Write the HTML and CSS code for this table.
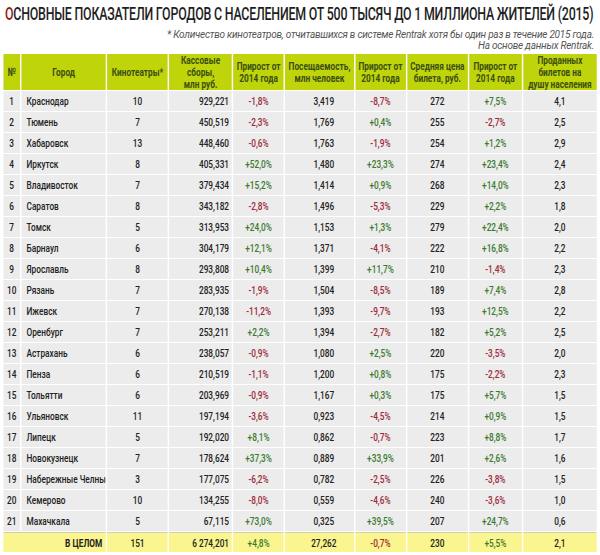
FILE: index.html
```html
<!DOCTYPE html>
<html lang="ru">
<head>
<meta charset="utf-8">
<title>Основные показатели</title>
<link rel="stylesheet" href="styles.css">
</head>
<body>
<div class="page">
  <div class="title-wrap">
    <h1 class="title"><span class="first">О</span>СНОВНЫЕ ПОКАЗАТЕЛИ ГОРОДОВ С НАСЕЛЕНИЕМ ОТ 500 ТЫСЯЧ ДО 1 МИЛЛИОНА ЖИТЕЛЕЙ (2015)</h1>
  </div>
  <p class="note">* Количество кинотеатров, отчитавшихся в системе Rentrak хотя бы один раз в течение 2015 года.<br>На основе данных Rentrak.</p>
  <div class="table-wrap">
  <table class="data">
    <colgroup>
      <col class="c-num"><col class="c-city"><col class="c-cin"><col class="c-box"><col class="c-g1"><col class="c-att"><col class="c-g2"><col class="c-price"><col class="c-g3"><col class="c-sold">
    </colgroup>
    <thead>
      <tr>
        <th>№</th><th>Город</th><th>Кинотеатры*</th><th>Кассовые<br>сборы,<br>млн руб.</th><th>Прирост от<br>2014 года</th><th>Посещаемость,<br>млн человек</th><th>Прирост от<br>2014 года</th><th>Средняя цена<br>билета, руб.</th><th>Прирост от<br>2014 года</th><th>Проданных<br>билетов на<br>душу населения</th>
      </tr>
    </thead>
    <tbody>
      <tr><td>1</td><td class="city">Краснодар</td><td>10</td><td class="r">929,221</td><td class="neg">-1,8%</td><td class="att">3,419</td><td class="neg">-8,7%</td><td>272</td><td class="pos">+7,5%</td><td>4,1</td></tr>
      <tr><td>2</td><td class="city">Тюмень</td><td>7</td><td class="r">450,519</td><td class="neg">-2,3%</td><td class="att">1,769</td><td class="pos">+0,4%</td><td>255</td><td class="neg">-2,7%</td><td>2,5</td></tr>
      <tr><td>3</td><td class="city">Хабаровск</td><td>13</td><td class="r">448,460</td><td class="neg">-0,6%</td><td class="att">1,763</td><td class="neg">-1,9%</td><td>254</td><td class="pos">+1,2%</td><td>2,9</td></tr>
      <tr><td>4</td><td class="city">Иркутск</td><td>8</td><td class="r">405,331</td><td class="pos">+52,0%</td><td class="att">1,480</td><td class="pos">+23,3%</td><td>274</td><td class="pos">+23,4%</td><td>2,4</td></tr>
      <tr><td>5</td><td class="city">Владивосток</td><td>7</td><td class="r">379,434</td><td class="pos">+15,2%</td><td class="att">1,414</td><td class="pos">+0,9%</td><td>268</td><td class="pos">+14,0%</td><td>2,3</td></tr>
      <tr><td>6</td><td class="city">Саратов</td><td>8</td><td class="r">343,182</td><td class="neg">-2,8%</td><td class="att">1,496</td><td class="neg">-5,3%</td><td>229</td><td class="pos">+2,2%</td><td>1,8</td></tr>
      <tr><td>7</td><td class="city">Томск</td><td>5</td><td class="r">313,953</td><td class="pos">+24,0%</td><td class="att">1,153</td><td class="pos">+1,3%</td><td>279</td><td class="pos">+22,4%</td><td>2,0</td></tr>
      <tr><td>8</td><td class="city">Барнаул</td><td>6</td><td class="r">304,179</td><td class="pos">+12,1%</td><td class="att">1,371</td><td class="neg">-4,1%</td><td>222</td><td class="pos">+16,8%</td><td>2,2</td></tr>
      <tr><td>9</td><td class="city">Ярославль</td><td>8</td><td class="r">293,808</td><td class="pos">+10,4%</td><td class="att">1,399</td><td class="pos">+11,7%</td><td>210</td><td class="neg">-1,4%</td><td>2,3</td></tr>
      <tr><td>10</td><td class="city">Рязань</td><td>7</td><td class="r">283,935</td><td class="neg">-1,9%</td><td class="att">1,504</td><td class="neg">-8,5%</td><td>189</td><td class="pos">+7,4%</td><td>2,8</td></tr>
      <tr><td>11</td><td class="city">Ижевск</td><td>7</td><td class="r">270,138</td><td class="neg">-11,2%</td><td class="att">1,393</td><td class="neg">-9,7%</td><td>193</td><td class="pos">+12,5%</td><td>2,2</td></tr>
      <tr><td>12</td><td class="city">Оренбург</td><td>7</td><td class="r">253,211</td><td class="pos">+2,2%</td><td class="att">1,394</td><td class="neg">-2,7%</td><td>182</td><td class="pos">+5,2%</td><td>2,5</td></tr>
      <tr><td>13</td><td class="city">Астрахань</td><td>6</td><td class="r">238,057</td><td class="neg">-0,9%</td><td class="att">1,080</td><td class="pos">+2,5%</td><td>220</td><td class="neg">-3,5%</td><td>2,0</td></tr>
      <tr><td>14</td><td class="city">Пенза</td><td>6</td><td class="r">210,519</td><td class="neg">-1,1%</td><td class="att">1,200</td><td class="pos">+0,8%</td><td>175</td><td class="neg">-2,2%</td><td>2,3</td></tr>
      <tr><td>15</td><td class="city">Тольятти</td><td>6</td><td class="r">203,969</td><td class="neg">-0,9%</td><td class="att">1,167</td><td class="pos">+0,3%</td><td>175</td><td class="pos">+5,7%</td><td>1,5</td></tr>
      <tr><td>16</td><td class="city">Ульяновск</td><td>11</td><td class="r">197,194</td><td class="neg">-3,6%</td><td class="att">0,923</td><td class="neg">-4,5%</td><td>214</td><td class="pos">+0,9%</td><td>1,5</td></tr>
      <tr><td>17</td><td class="city">Липецк</td><td>5</td><td class="r">192,020</td><td class="pos">+8,1%</td><td class="att">0,862</td><td class="neg">-0,7%</td><td>223</td><td class="pos">+8,8%</td><td>1,7</td></tr>
      <tr><td>18</td><td class="city">Новокузнецк</td><td>7</td><td class="r">178,624</td><td class="pos">+37,3%</td><td class="att">0,889</td><td class="pos">+33,9%</td><td>201</td><td class="pos">+2,6%</td><td>1,6</td></tr>
      <tr><td>19</td><td class="city">Набережные Челны</td><td>3</td><td class="r">177,075</td><td class="neg">-6,2%</td><td class="att">0,782</td><td class="neg">-2,5%</td><td>226</td><td class="neg">-3,8%</td><td>1,5</td></tr>
      <tr><td>20</td><td class="city">Кемерово</td><td>10</td><td class="r">134,255</td><td class="neg">-8,0%</td><td class="att">0,559</td><td class="neg">-4,6%</td><td>240</td><td class="neg">-3,6%</td><td>1,0</td></tr>
      <tr><td>21</td><td class="city">Махачкала</td><td>5</td><td class="r">67,115</td><td class="pos">+73,0%</td><td class="att">0,325</td><td class="pos">+39,5%</td><td>207</td><td class="pos">+24,7%</td><td>0,6</td></tr>
    </tbody>
    <tfoot>
      <tr><td colspan="2" class="total-label">В ЦЕЛОМ</td><td>151</td><td class="r">6 274,201</td><td class="pos">+4,8%</td><td class="att">27,262</td><td class="neg">-0,7%</td><td>230</td><td class="pos">+5,5%</td><td>2,1</td></tr>
    </tfoot>
  </table>
  </div>
</div>
</body>
</html>
```

FILE: styles.css
```css
html, body {
  margin: 0;
  padding: 0;
  background: #ffffff;
}

.page {
  width: 600px;
  padding: 0 2px;
  box-sizing: border-box;
  font-family: Roboto, "Liberation Sans", sans-serif;
  color: #222222;
  overflow: hidden;
}

/* headline drawn with a horizontally condensed face */
.title-wrap {
  padding: 3px 0 0 3px;
  height: 22px;
}

.title {
  display: inline-block;
  margin: 0;
  font-size: 18px;
  line-height: 22px;
  font-weight: 500;
  letter-spacing: -0.3px;
  color: #1e1e1e;
  white-space: nowrap;
  transform: scaleX(0.688);
  transform-origin: 0 0;
}

.title .first {
  color: #8c1c1c;
}

.note {
  margin: 4px 4px 0 0;
  text-align: right;
  font-size: 10px;
  line-height: 11px;
  font-style: italic;
  letter-spacing: -0.25px;
  color: #555555;
}

/* the table is drawn with a horizontally condensed face */
.table-wrap {
  width: 596px;
  margin-top: 2px;
  overflow: hidden;
}

.data {
  width: 828px;
  table-layout: fixed;
  border-collapse: separate;
  border-spacing: 2px 1px;
  transform: scaleX(0.72);
  transform-origin: 0 0;
  font-size: 11.5px;
}

.c-num { width: 23px; }
.c-city { width: 117px; }
.c-cin { width: 84px; }
.c-box { width: 87px; }
.c-g1 { width: 70px; }
.c-att { width: 95px; }
.c-g2 { width: 70px; }
.c-price { width: 84px; }
.c-g3 { width: 73px; }
.c-sold { width: 102px; }

.data th {
  background: #bfd40b;
  color: #3a4f12;
  font-weight: bold;
  font-size: 11.5px;
  line-height: 12px;
  height: 36px;
  padding: 0;
  text-align: center;
  vertical-align: middle;
  white-space: nowrap;
}

.data td {
  background: #ececec;
  height: 20px;
  padding: 0 2px;
  text-align: center;
  white-space: nowrap;
  overflow: hidden;
  color: #222222;
  font-weight: 500;
}

.data td.city {
  text-align: left;
  padding-left: 7px;
}

.data td.r {
  text-align: right;
  padding-right: 4px;
}

.data td.att {
  padding-left: 14px;
}

.data td.neg {
  color: #9c2a3a;
}

.data td.pos {
  color: #3b7a2e;
}

.data tfoot td {
  background: #faf58e;
  height: 19px;
  border-top: 1px solid #cfcfb8;
}

.data tfoot td.total-label {
  text-align: right;
  font-weight: bold;
  padding-right: 5px;
}
```
